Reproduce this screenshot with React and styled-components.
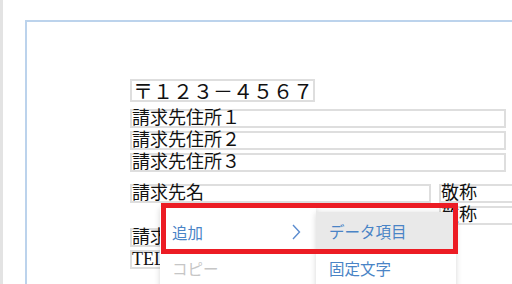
import React from 'react'
import styled, { createGlobalStyle } from 'styled-components'

const GlobalStyle = createGlobalStyle`
  html, body {
    margin: 0;
    padding: 0;
    background: #ffffff;
    overflow: hidden;
  }
`

function Chevron() {
  return (
    <svg width="10" height="16" viewBox="0 0 10 16">
      <polyline points="2,1 8.5,8 2,15" fill="none" stroke="#5b8ccf" strokeWidth="1.4" />
    </svg>
  )
}

function App() {
  return (
    <Screen>
      <GlobalStyle />
      <SideEdge />
      <Workspace>
        <Page>
          <Form>
            <PostalBox>〒１２３－４５６７</PostalBox>
            <Group>
              <Field $w={376}>請求先住所１</Field>
              <Field $w={376}>請求先住所２</Field>
              <Field $w={376}>請求先住所３</Field>
            </Group>
            <Group>
              <Row>
                <Field $w={301}>請求先名</Field>
                <Field $w={90}>敬称</Field>
              </Row>
              <Row $indent={309}>
                <Field $w={90}>敬称</Field>
              </Row>
              <Field $w={301}>請求先名２</Field>
              <Field $w={200}>TEL</Field>
            </Group>
          </Form>
        </Page>
      </Workspace>

      <Menu>
        <MenuItem>
          <span>追加</span>
          <Chevron />
        </MenuItem>
        <MenuItem $disabled>コピー</MenuItem>
      </Menu>
      <SubMenu>
        <SubItem $active>データ項目</SubItem>
        <SubItem>固定文字</SubItem>
      </SubMenu>
      <Highlight />
    </Screen>
  )
}

export default App

const Screen = styled.div`
  position: relative;
  width: 512px;
  height: 284px;
  display: flex;
  overflow: hidden;
  background: #ffffff;
`

const SideEdge = styled.div`
  width: 3px;
  flex-shrink: 0;
  background: #e3e3e3;
`

const Workspace = styled.div`
  flex: 1;
  padding: 20px 0 0 22px;
`

const Page = styled.div`
  height: 100%;
  box-sizing: border-box;
  border-top: 2px solid #bcd3ec;
  border-left: 2px solid #bcd3ec;
  padding: 57px 0 0 103px;
`

const Form = styled.div`
  display: flex;
  flex-direction: column;
  gap: 7px;
  font-family: "Liberation Serif", "Noto Sans CJK JP", serif;
  color: #111;
`

const PostalBox = styled.div`
  width: 185px;
  height: 23px;
  box-sizing: border-box;
  border: 2px solid #dedede;
  font-family: "Noto Sans CJK JP", sans-serif;
  font-size: 20px;
  line-height: 19px;
  padding-left: 1px;
  white-space: nowrap;
`

const Group = styled.div`
  display: flex;
  flex-direction: column;
  gap: 3px;

  & + & {
    margin-top: 5px;
  }
`

const Row = styled.div`
  display: flex;
  gap: 8px;
  padding-left: ${p => p.$indent || 0}px;
`

const Field = styled.div`
  width: ${p => p.$w}px;
  flex-shrink: 0;
  height: 19px;
  box-sizing: border-box;
  border: 2px solid #dedede;
  font-size: 18px;
  line-height: 15px;
  padding-left: 0;
  white-space: nowrap;
  overflow: visible;
`

const Menu = styled.div`
  position: absolute;
  left: 160px;
  top: 207px;
  width: 156px;
  height: 100px;
  padding-top: 7px;
  box-sizing: border-box;
  background: #ffffff;
  box-shadow: 0 1px 6px rgba(0, 0, 0, 0.16);
  font-family: "Noto Sans CJK JP", sans-serif;
`

const MenuItem = styled.div`
  height: 36px;
  display: flex;
  align-items: center;
  justify-content: space-between;
  padding: 0 15px 0 12px;
  font-size: 15.5px;
  color: ${p => (p.$disabled ? '#c6c6c6' : '#4a84c6')};
`

const SubMenu = styled.div`
  position: absolute;
  left: 316px;
  top: 212px;
  width: 140px;
  height: 90px;
  background: #ffffff;
  box-shadow: 0 1px 6px rgba(0, 0, 0, 0.16);
  font-family: "Noto Sans CJK JP", sans-serif;
`

const SubItem = styled.div`
  height: 37px;
  display: flex;
  align-items: center;
  padding-left: 13px;
  font-size: 15.5px;
  color: #4a84c6;
  background: ${p => (p.$active ? '#e9e9e9' : 'transparent')};
`

const Highlight = styled.div`
  position: absolute;
  left: 161px;
  top: 203px;
  width: 297px;
  height: 51px;
  box-sizing: border-box;
  border: 5px solid #ec1c24;
`
